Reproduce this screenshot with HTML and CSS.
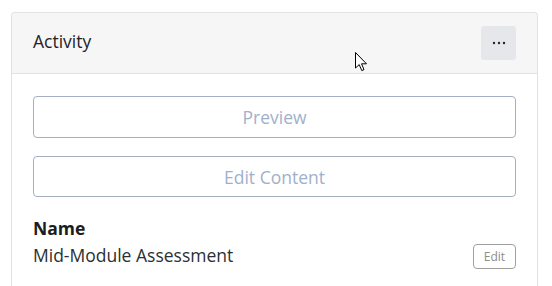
FILE: index.html
```html
<!doctype html>
<html lang="en">
  <head>
    <meta charset="UTF-8" />
    <meta name="viewport" content="width=device-width, initial-scale=1.0" />
    <title>Activity</title>
    <link rel="stylesheet" href="styles.css">
  </head>
  <body>
    <section class="card">
      <header class="card-header">
        <h2 class="card-title">Activity</h2>
        <button class="more-btn" type="button" aria-label="More options">
          <svg width="14" height="4" viewBox="0 0 14 4">
            <circle cx="2" cy="2" r="1.2" />
            <circle cx="7" cy="2" r="1.2" />
            <circle cx="12" cy="2" r="1.2" />
          </svg>
        </button>
      </header>
      <div class="card-body">
        <button class="outline-btn" type="button">Preview</button>
        <button class="outline-btn" type="button">Edit Content</button>
        <div class="field">
          <div class="field-label">Name</div>
          <div class="field-row">
            <span class="field-value">Mid-Module Assessment</span>
            <button class="edit-btn" type="button">Edit</button>
          </div>
        </div>
      </div>
    </section>

    <!-- mouse pointer captured in the screenshot -->
    <svg class="cursor" width="13" height="20" viewBox="0 0 13 20">
      <path d="M0.5 0.5 L0.5 16 L4.2 12.6 L6.8 18.6 L9 17.6 L6.5 11.8 L11.5 11.8 Z" fill="#fff" stroke="#000" stroke-width="1" stroke-linejoin="miter"/>
    </svg>
  </body>
</html>
```

FILE: styles.css
```css
html {
  height: 100%;
}

body {
  margin: 0;
  padding: 12px 0 0 11px;
  height: 100%;
  box-sizing: border-box;
  position: relative;
  display: flex;
  flex-direction: column;
  background: #fff;
  font-family: "Open Sans", "Noto Sans", sans-serif;
  color: #1f2328;
  overflow: hidden;
}

.card {
  flex: 1;
  width: 527px;
  box-sizing: border-box;
  border: 1px solid #e2e2e2;
  border-bottom: none;
  border-radius: 4px 4px 0 0;
  background: #fff;
}

.card-header {
  display: flex;
  align-items: center;
  justify-content: space-between;
  padding: 13px 21px;
  background: #f6f6f6;
  border-bottom: 1px solid #e2e2e2;
  border-radius: 4px 4px 0 0;
}

.card-title {
  margin: 0 0 5px;
  font-size: 17.5px;
  font-weight: 400;
  line-height: 24px;
  color: #1f2328;
}

.more-btn {
  display: flex;
  align-items: center;
  justify-content: center;
  width: 35px;
  height: 34px;
  padding: 0;
  border: none;
  border-radius: 3px;
  background: #e5e7eb;
  fill: #22262b;
}

.card-body {
  display: flex;
  flex-direction: column;
  padding: 22px 21px 0;
}

.outline-btn {
  height: 42px;
  margin-bottom: 18px;
  border: 1px solid #a5b0c3;
  border-radius: 4px;
  background: #fff;
  color: #9fb0cc;
  font-family: inherit;
  font-size: 17.5px;
}

.outline-btn + .outline-btn {
  height: 41px;
}

.field {
  margin-top: 2px;
}

.field-label {
  font-weight: 700;
  font-size: 17.5px;
  line-height: 22px;
  color: #1a1d21;
}

.field-row {
  display: flex;
  align-items: center;
  justify-content: space-between;
  margin-top: 2px;
}

.field-value {
  font-size: 17.5px;
  line-height: 26px;
  color: #2b2f33;
}

.edit-btn {
  width: 43px;
  height: 25px;
  margin-top: 3px;
  padding: 0;
  border: 1px solid #a0a0a0;
  border-radius: 4px;
  background: #fff;
  color: #8c8c8c;
  font-family: inherit;
  font-size: 12px;
}

.cursor {
  position: absolute;
  left: 355px;
  top: 52px;
}
```
